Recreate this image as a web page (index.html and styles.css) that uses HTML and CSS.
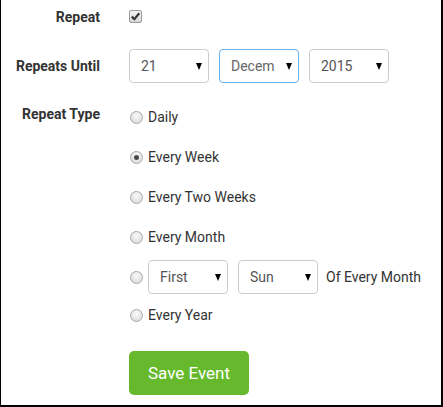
FILE: index.html
```html
<!DOCTYPE html>
<html lang="en">
<head>
    <meta charset="UTF-8">
    <meta name="viewport" content="width=device-width, initial-scale=1.0">
    <title>Repeat Event</title>
    <link rel="stylesheet" href="styles.css">
</head>
<body>
    <div class="frame">
        <div class="row row-repeat">
            <div class="label">Repeat</div>
            <div class="field">
                <span class="checkbox">
                    <svg width="9" height="9" viewBox="0 0 9 9"><path d="M0.8 4.6 L3.4 7.2 L8.3 1.2" fill="none" stroke="#333" stroke-width="2.2"/></svg>
                </span>
            </div>
        </div>
        <div class="row row-until">
            <div class="label">Repeats Until</div>
            <div class="field selects">
                <div class="select"><span>21</span><i class="arrow"></i></div>
                <div class="select focus"><span>Decem</span><i class="arrow"></i></div>
                <div class="select"><span>2015</span><i class="arrow"></i></div>
            </div>
        </div>
        <div class="row row-type">
            <div class="label label-top">Repeat Type</div>
            <div class="field options">
                <div class="option"><span class="radio"></span>Daily</div>
                <div class="option"><span class="radio checked"></span>Every Week</div>
                <div class="option"><span class="radio"></span>Every Two Weeks</div>
                <div class="option"><span class="radio"></span>Every Month</div>
                <div class="option option-custom">
                    <span class="radio"></span>
                    <div class="select"><span>First</span><i class="arrow"></i></div>
                    <div class="select"><span>Sun</span><i class="arrow"></i></div>
                    <span class="suffix">Of Every Month</span>
                </div>
                <div class="option option-last"><span class="radio"></span>Every Year</div>
                <button class="save">Save Event</button>
            </div>
        </div>
    </div>
</body>
</html>
```
FILE: styles.css
```css
body {
    margin: 0;
    font-family: Roboto, "Liberation Sans", Arial, sans-serif;
    font-size: 14px;
    color: #333;
    background: #fff;
}
.frame {
    width: 443px;
    height: 407px;
    box-sizing: border-box;
    border-left: 1px solid #000;
    border-right: 2px solid #000;
    border-bottom: 2px solid #000;
}
.row {
    display: grid;
    grid-template-columns: 99px 1fr;
    column-gap: 29px;
    align-items: center;
}
.row-repeat {
    height: 33px;
}
.row-until {
    margin-top: 16px;
    height: 34px;
}
.row-type {
    margin-top: 14px;
    align-items: start;
}
.label {
    font-weight: bold;
    text-align: right;
}
.label-top {
    line-height: 20px;
    padding-top: 7px;
}
.checkbox {
    display: flex;
    align-items: center;
    justify-content: center;
    width: 11px;
    height: 11px;
    border: 1px solid #9a9a9a;
    border-radius: 2px;
    background: linear-gradient(#f4f4f4, #d8d8d8);
}
.selects {
    display: flex;
    gap: 10px;
}
.select {
    display: flex;
    align-items: center;
    justify-content: space-between;
    width: 80px;
    height: 34px;
    box-sizing: border-box;
    padding: 0 6px 0 11px;
    border: 1px solid #ccc;
    border-radius: 4px;
    color: #555;
    font-size: 14px;
    background: #fff;
}
.select.focus {
    border-color: #66afe9;
    color: #666;
}
.arrow {
    flex: none;
    width: 0;
    height: 0;
    border-left: 3.5px solid transparent;
    border-right: 3.5px solid transparent;
    border-top: 7px solid #000;
}
.options {
    display: flex;
    flex-direction: column;
}
.option {
    display: flex;
    align-items: center;
    gap: 5px;
    height: 40px;
}
.option-custom {
    gap: 0;
}
.option-custom .select {
    margin-left: 5px;
}
.option-custom .select + .select {
    margin-left: 10px;
}
.option-last {
    height: 36px;
}
.suffix {
    margin-left: 8px;
}
.radio {
    width: 11px;
    height: 11px;
    margin-left: 1px;
    border: 1px solid #a8a8a8;
    border-radius: 50%;
    background: radial-gradient(circle at 50% 35%, #fafafa, #d6d6d6);
    display: flex;
    align-items: center;
    justify-content: center;
}
.radio.checked::after {
    content: "";
    width: 5px;
    height: 5px;
    border-radius: 50%;
    background: #4a4a4a;
}
.save {
    margin-top: 18px;
    width: 120px;
    height: 44px;
    border: none;
    border-radius: 5px;
    background: #66b92d;
    color: #fff;
    font-family: Roboto, "Liberation Sans", Arial, sans-serif;
    font-size: 17px;
    cursor: pointer;
}
```
